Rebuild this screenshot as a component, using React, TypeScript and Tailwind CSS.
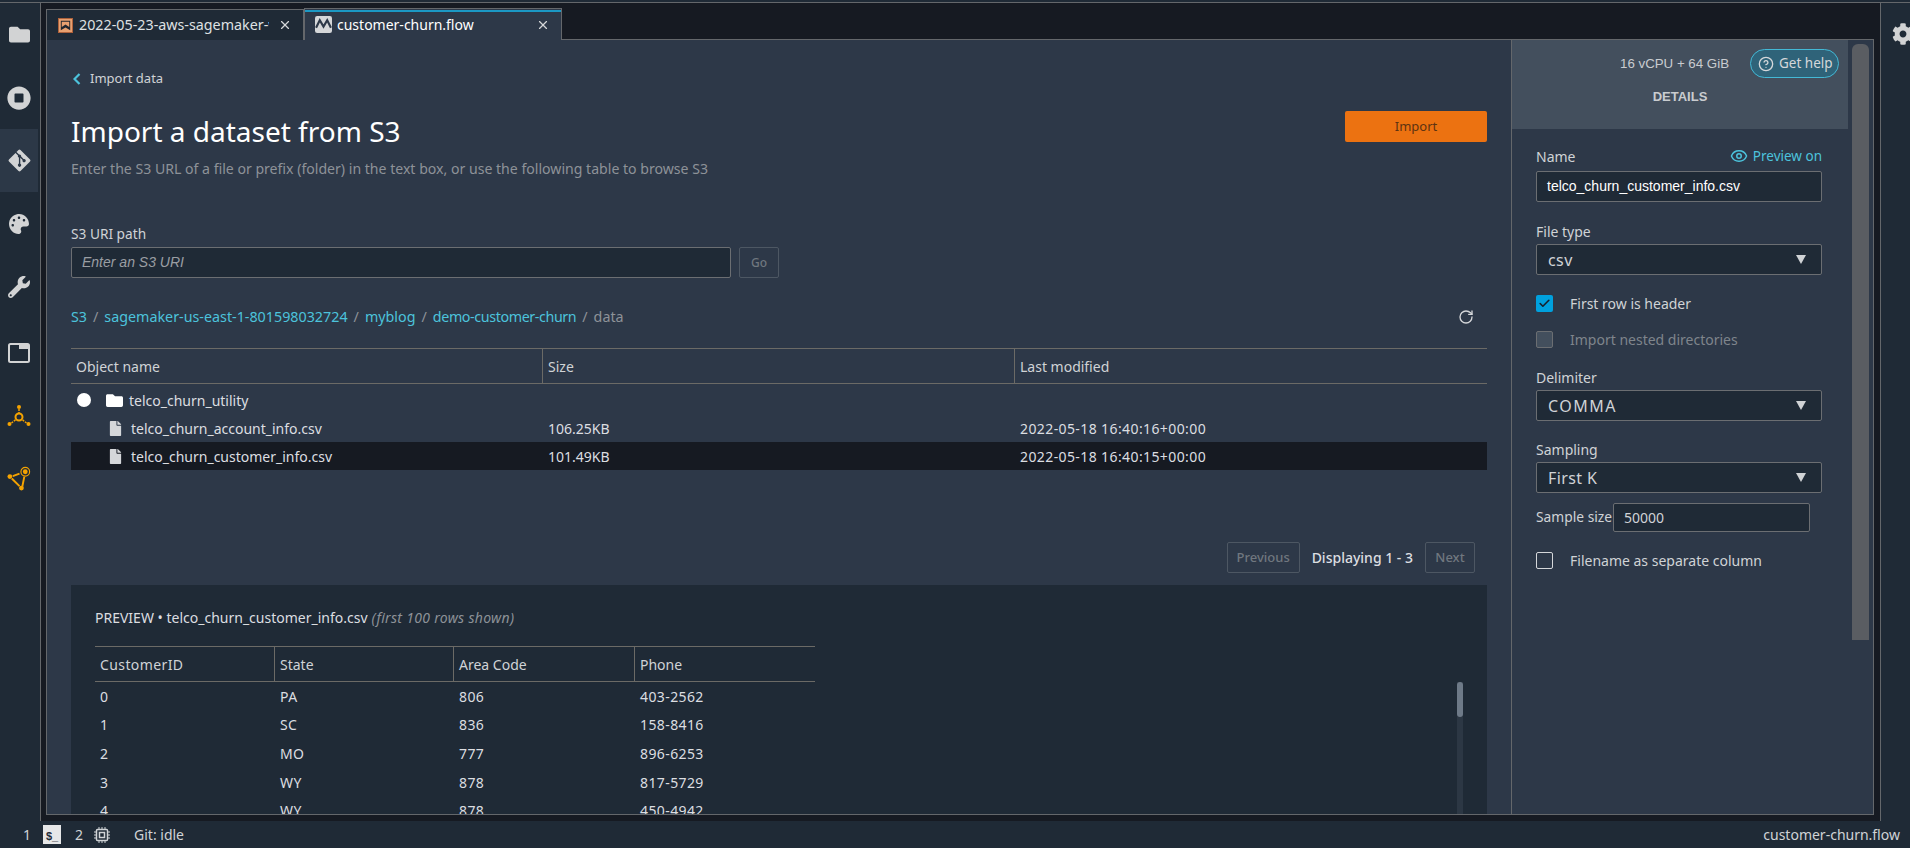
import { Check, CircleHelp, Eye, RotateCw, X } from "lucide-react";
import type { ReactNode } from "react";
import { FaFile, FaFolder, FaGitAlt, FaPalette, FaStopCircle, FaWrench, FaCog } from "react-icons/fa";

const sans = "font-['Noto_Sans',sans-serif]";
const arial = "font-['Liberation_Sans',Arial,sans-serif]";

const previewRows = [
  ["0", "PA", "806", "403-2562"],
  ["1", "SC", "836", "158-8416"],
  ["2", "MO", "777", "896-6253"],
  ["3", "WY", "878", "817-5729"],
  ["4", "WY", "878", "450-4942"],
];

function RailItem({ children, active = false }: { children: ReactNode; active?: boolean }) {
  return (
    <div className={`flex h-[63px] shrink-0 items-center justify-center text-[#d2d3d4] ${active ? "bg-[#2c3847]" : ""}`}>
      {children}
    </div>
  );
}

function Rail() {
  return (
    <aside className="flex w-[41px] shrink-0 flex-col border-r border-[#64676b] bg-[#1f2a36] pr-[2px]">
      <RailItem><FaFolder className="size-[21px]" /></RailItem>
      <RailItem><FaStopCircle className="size-[24px]" /></RailItem>
      <RailItem active><FaGitAlt className="size-[25px]" /></RailItem>
      <RailItem><FaPalette className="size-[20px]" /></RailItem>
      <RailItem><FaWrench className="size-[22px]" /></RailItem>
      <div className="mt-[3px]">
        <RailItem>
          <svg viewBox="0 0 22 20" className="h-[20px] w-[22px]" fill="none">
            <rect x="1" y="1" width="20" height="18" rx="1.5" stroke="currentColor" strokeWidth="2" />
            <rect x="11" y="1" width="10" height="5" fill="currentColor" />
          </svg>
        </RailItem>
      </div>
      <RailItem>
        <svg viewBox="0 0 24 24" className="size-[24px]" fill="none" stroke="#f5a300" strokeWidth="1.5">
          <circle cx="12" cy="13" r="3.5" strokeWidth="2" />
          <circle cx="12" cy="3" r="2" fill="#f5a300" stroke="none" />
          <circle cx="2.5" cy="20" r="2" fill="#f5a300" stroke="none" />
          <circle cx="21.5" cy="20" r="2" fill="#f5a300" stroke="none" />
          <path d="M12 5v4M4.5 19l4.5-3.5M19.5 19 15 15.5" strokeDasharray="2 1" />
        </svg>
      </RailItem>
      <RailItem>
        <svg viewBox="0 0 26 26" className="size-[25px]" fill="none" stroke="#f5a300" strokeWidth="2">
          <circle cx="19" cy="6" r="4.5" strokeWidth="1.2" />
          <circle cx="19" cy="6" r="2.5" fill="#f5a300" stroke="none" />
          <circle cx="3" cy="11" r="2.5" fill="#f5a300" stroke="none" />
          <circle cx="15" cy="23" r="2.5" fill="#f5a300" stroke="none" />
          <path d="M6 10.5 13 8M5 13l8 8M16 21l2-10" />
        </svg>
      </RailItem>
    </aside>
  );
}

function Tabs() {
  return (
    <div className="relative z-10 -mb-px flex h-[37px] items-end pl-[5px]">
      <div className={`flex h-[31px] w-[258px] items-center border border-b-0 border-[#64676b] bg-[#1f2a36] pl-[11px] ${sans}`}>
        <svg viewBox="0 0 16 16" className="size-[15px] shrink-0">
          <rect x="0.5" y="0.5" width="15" height="15" fill="#e8a070" stroke="#b0623a" />
          <path d="M3 3h10v10l-5-3-5 3z" fill="#20252e" />
          <path d="M4 4h8v5.5L8 7 4 9.5z" fill="#e8a070" />
        </svg>
        <span className="ml-[6px] w-[190px] overflow-hidden whitespace-nowrap text-[14.3px] text-[#dfe1e3]">2022-05-23-aws-sagemaker-wrangler</span>
        <X className="ml-[9px] size-[14px] text-[#d5d7d9]" />
      </div>
      <div className={`relative flex h-[32px] w-[258px] items-center border-x border-t border-[#64676b] bg-[#2d3848] pl-[10px] ${sans}`}>
        <div className="absolute inset-x-0 top-[1px] h-[2px] bg-[#1b98c4]" />
        <svg viewBox="0 0 16 16" className="size-[17px] shrink-0">
          <rect width="16" height="16" rx="2" fill="#d5d7d9" />
          <path d="M1 11 4.5 4 8 10l3.5-6L15 11" fill="none" stroke="#2d3848" strokeWidth="2" />
        </svg>
        <span className="ml-[5px] w-[199px] text-[14px] text-white">customer-churn.flow</span>
        <X className="size-[14px] text-[#d5d7d9]" />
      </div>
    </div>
  );
}

function FileBrowser() {
  return (
    <>
      <div className="mt-[21px] flex h-[36px] border-y border-[#6b6a66] text-[14px] text-[#d0d3d6]">
        <div className="flex w-[472px] items-center border-r border-[#6b6a66] pl-[5px]">Object name</div>
        <div className="flex w-[472px] items-center border-r border-[#6b6a66] pl-[5px]">Size</div>
        <div className="flex flex-1 items-center pl-[5px]">Last modified</div>
      </div>
      <div className="text-[14px] text-[#dcdee1]">
        <div className="flex h-[30px] items-center pt-[2px]">
          <span className="ml-[6px] size-[14px] rounded-full bg-white" />
          <FaFolder className="ml-[15px] size-[17px] text-white" />
          <span className="ml-[6px]">telco_churn_utility</span>
        </div>
        <div className="flex h-[28px] items-center">
          <div className="flex w-[472px] items-center pl-[37px]">
            <FaFile className="size-[15px] text-[#d5d7da]" />
            <span className="ml-[8px]">telco_churn_account_info.csv</span>
          </div>
          <div className="w-[472px] pl-[5px]">106.25KB</div>
          <div className="pl-[5px] tracking-[0.4px]">2022-05-18 16:40:16+00:00</div>
        </div>
        <div className="flex h-[28px] items-center bg-[#161a22]">
          <div className="flex w-[472px] items-center pl-[37px]">
            <FaFile className="size-[15px] text-[#d5d7da]" />
            <span className="ml-[8px]">telco_churn_customer_info.csv</span>
          </div>
          <div className="w-[472px] pl-[5px]">101.49KB</div>
          <div className="pl-[5px] tracking-[0.4px]">2022-05-18 16:40:15+00:00</div>
        </div>
      </div>
    </>
  );
}

function Preview() {
  return (
    <section className="relative mt-[12px] min-h-0 flex-1 overflow-hidden bg-[#1f2a36] pl-[24px] text-[14px] text-[#dcdee1]">
      <div className="mt-[22px] flex h-[20px] items-center">
        PREVIEW • telco_churn_customer_info.csv
        <span className="ml-[4px] italic tracking-[0.3px] text-[#8d9298]">(first 100 rows shown)</span>
      </div>
      <div className="mt-[19px] w-[720px]">
        <div className="grid h-[36px] grid-cols-[180px_179px_181px_180px] border-y border-[#6b6a66] text-[#d0d3d6]">
          <div className="flex items-center border-r border-[#6b6a66] pl-[5px] tracking-[0.4px]">CustomerID</div>
          <div className="flex items-center border-r border-[#6b6a66] pl-[5px]">State</div>
          <div className="flex items-center border-r border-[#6b6a66] pl-[5px]">Area Code</div>
          <div className="flex items-center pl-[5px]">Phone</div>
        </div>
        {previewRows.map((row) => (
          <div key={row[0]} className="grid h-[28.6px] grid-cols-[180px_179px_181px_180px] items-center tracking-[0.4px]">
            {row.map((cell, i) => (
              <div key={i} className="pl-[5px]">{cell}</div>
            ))}
          </div>
        ))}
      </div>
      <div className="absolute bottom-0 right-[24px] top-[97px] w-[6px] bg-[#2c3744]">
        <div className="h-[35px] rounded-[3px] bg-[#6e7a88]" />
      </div>
    </section>
  );
}

function FieldLabel({ children }: { children: ReactNode }) {
  return <div className="flex h-[20px] items-center text-[14px] text-[#d0d3d6]">{children}</div>;
}

function SelectBox({ value, tracking = "tracking-[0.4px]" }: { value: string; tracking?: string }) {
  return (
    <div className="mt-[3px] flex h-[31px] w-[286px] items-center justify-between rounded-[2px] border border-[#6b6e72] bg-[#1f2a36] pl-[11px] pr-[15px] text-[16px] text-[#d0d3d6]">
      <span className={tracking}>{value}</span>
      <span className="h-0 w-0 border-x-[5.5px] border-t-[9px] border-x-transparent border-t-[#d0d3d6]" />
    </div>
  );
}

function Details() {
  return (
    <aside className="flex w-[362px] shrink-0 border-l border-[#64676b]">
      <div className="w-[336px] shrink-0">
        <div className="h-[89px] bg-[#434f5d] pt-[9px]">
          <div className="flex h-[29px] items-center pl-[108px]">
            <span className={`text-[13.3px] text-[#c9ccd0] ${arial}`}>16 vCPU + 64 GiB</span>
            <span className="ml-[21px] flex h-[29px] w-[89px] items-center rounded-full border border-[#44b9d6] bg-[#2f6379] pl-[7px] text-[13.5px] text-[#d5d7da]">
              <CircleHelp className="size-[16px]" />
              <span className="ml-[5px]">Get help</span>
            </span>
          </div>
          <div className={`mt-[9px] text-center text-[13px] font-bold leading-[20px] text-[#c9ccd0] ${arial}`}>DETAILS</div>
        </div>
        <div className="pl-[24px] pt-[17px]">
          <div className="flex w-[286px] items-center justify-between">
            <FieldLabel>Name</FieldLabel>
            <span className="flex items-center text-[13.5px] text-[#4cc3dc]">
              <Eye className="size-[18px]" />
              <span className="ml-[5px]">Preview on</span>
            </span>
          </div>
          <div className={`mt-[5px] flex h-[31px] w-[286px] items-center rounded-[2px] border border-[#6b6e72] bg-[#1f2a36] pl-[10px] text-[14px] text-white ${arial}`}>
            telco_churn_customer_info.csv
          </div>
          <div className="mt-[19px]"><FieldLabel>File type</FieldLabel></div>
          <SelectBox value="csv" />
          <div className="mt-[20px] flex h-[17px] items-center text-[14px] text-[#d0d3d6]">
            <span className="flex size-[17px] items-center justify-center rounded-[2px] bg-[#00a1de]">
              <Check className="size-[13px] text-[#16202c]" strokeWidth={3} />
            </span>
            <span className="ml-[17px]">First row is header</span>
          </div>
          <div className="mt-[19px] flex h-[17px] items-center text-[14px] text-[#7f858c]">
            <span className="size-[17px] rounded-[2px] border border-[#6b6e72] bg-[#434f5d]" />
            <span className="ml-[17px]">Import nested directories</span>
          </div>
          <div className="mt-[19px]"><FieldLabel>Delimiter</FieldLabel></div>
          <SelectBox value="COMMA" tracking="tracking-[1.5px]" />
          <div className="mt-[18px]"><FieldLabel>Sampling</FieldLabel></div>
          <SelectBox value="First K" />
          <div className="mt-[10px] flex items-center">
            <span className="w-[77px] shrink-0 whitespace-nowrap text-[13.8px] text-[#d0d3d6]">Sample size</span>
            <span className="flex h-[29px] w-[197px] items-center rounded-[2px] border border-[#6b6e72] bg-[#1f2a36] pl-[10px] text-[14px] text-[#d0d3d6]">50000</span>
          </div>
          <div className="mt-[20px] flex h-[17px] items-center text-[14px] text-[#d0d3d6]">
            <span className="size-[17px] rounded-[2px] border border-[#d5d7da]" />
            <span className="ml-[17px]">Filename as separate column</span>
          </div>
        </div>
      </div>
      <div className="ml-[4px] mt-[4px] h-[596px] w-[17px] rounded-t-[6px] bg-[#5a5d62]" />
    </aside>
  );
}

export default function App() {
  return (
    <div className={`flex h-[848px] w-[1910px] flex-col overflow-hidden bg-[#161a22] ${sans}`}>
      <div className="h-[3px] shrink-0 border-b border-[#64676b] bg-[#1f2a36]" />
      <div className="flex min-h-0 flex-1">
        <Rail />
        <div className="flex w-[1840px] shrink-0 flex-col border-r border-[#64676b] pb-[6px]">
          <Tabs />
          <div className="flex min-h-0 flex-1 pl-[5px] pr-[6px]">
            <main className="flex min-h-0 flex-1 border border-[#64676b] bg-[#2d3848]">
              <div className="flex min-w-0 flex-1 flex-col pl-[24px] pr-[24px]">
                <div className="mt-[29px] flex h-[20px] items-center text-[13px] text-[#d0d3d6]">
                  <svg viewBox="0 0 8 12" className="ml-[2px] h-[12px] w-[8px]" fill="none" stroke="#4cc3dc" strokeWidth="2.2">
                    <path d="M6.5 1 1.5 6l5 5" />
                  </svg>
                  <span className="ml-[9px]">Import data</span>
                </div>
                <div className="mt-[22px] flex h-[40px] items-start justify-between">
                  <h1 className="text-[28px] leading-[40px] text-white">Import a dataset from S3</h1>
                  <button className="h-[31px] w-[142px] rounded-[2px] bg-[#ec7211] text-[13px] text-[#5d3312]">Import</button>
                </div>
                <div className="mt-[8px] flex h-[20px] items-center text-[14.1px] text-[#8d9298]">
                  Enter the S3 URL of a file or prefix (folder) in the text box, or use the following table to browse S3
                </div>
                <div className="mt-[45px] flex h-[20px] items-center text-[13.7px] text-[#d0d3d6]">S3 URI path</div>
                <div className="mt-[3px] flex gap-[8px]">
                  <div className={`flex h-[31px] w-[660px] items-center rounded-[2px] border border-[#6b6e72] bg-[#1f2a36] pl-[10px] text-[14px] italic text-[#9a9ea3] ${arial}`}>
                    Enter an S3 URI
                  </div>
                  <button className="h-[31px] w-[40px] rounded-[2px] border border-[#4d5763] text-[12px] font-medium text-[#70777f]">Go</button>
                </div>
                <div className="mt-[29px] flex h-[20px] items-center text-[14.3px] text-[#8d9298]">
                  <span className="text-[#4cc3dc]">S3</span>
                  <span className="mx-[6px]">/</span>
                  <span className="text-[#4cc3dc]">sagemaker-us-east-1-801598032724</span>
                  <span className="mx-[6px]">/</span>
                  <span className="text-[#4cc3dc]">myblog</span>
                  <span className="mx-[6px]">/</span>
                  <span className="tracking-[-0.4px] text-[#4cc3dc]">demo-customer-churn</span>
                  <span className="mx-[6px]">/</span>
                  <span>data</span>
                  <RotateCw className="ml-auto mr-[13px] size-[16px] text-[#d5d7da]" />
                </div>
                <FileBrowser />
                <div className="mt-[72px] flex h-[31px] justify-end gap-[12px] pr-[12px] text-[13px]">
                  <button className="w-[73px] rounded-[2px] border border-[#4d5763] font-medium text-[#70777f]">Previous</button>
                  <span className="flex items-center text-[14px] font-medium text-[#dcdee1]">Displaying 1 - 3</span>
                  <button className="w-[50px] rounded-[2px] border border-[#4d5763] font-medium text-[#70777f]">Next</button>
                </div>
                <Preview />
              </div>
              <Details />
            </main>
          </div>
        </div>
        <aside className="min-w-0 flex-1 bg-[#1f2a36] pl-[11px] pt-[20px]">
          <FaCog className="size-[22px] text-[#d2d3d4]" />
        </aside>
      </div>
      <footer className="flex h-[27px] shrink-0 items-center bg-[#1f2a36] text-[14px] text-[#d0d3d6]">
        <span className="ml-[23px]">1</span>
        <span className={`ml-[12px] flex h-[19px] w-[18px] items-end justify-center bg-[#e6e7e8] text-[11px] font-bold text-[#1f2a36] ${arial}`}>$_</span>
        <span className="ml-[14px]">2</span>
        <svg viewBox="0 0 16 16" className="ml-[11px] size-[16px]" fill="none" stroke="currentColor">
          <rect x="2.5" y="2.5" width="11" height="11" rx="1" strokeWidth="1.5" />
          <rect x="5.5" y="5.5" width="5" height="5" strokeWidth="1.5" />
          <path d="M5 0v2M8 0v2M11 0v2M5 14v2M8 14v2M11 14v2M0 5h2M0 8h2M0 11h2M14 5h2M14 8h2M14 11h2" />
        </svg>
        <span className="ml-[24px]">Git: idle</span>
        <span className="ml-auto mr-[10px]">customer-churn.flow</span>
      </footer>
    </div>
  );
}
